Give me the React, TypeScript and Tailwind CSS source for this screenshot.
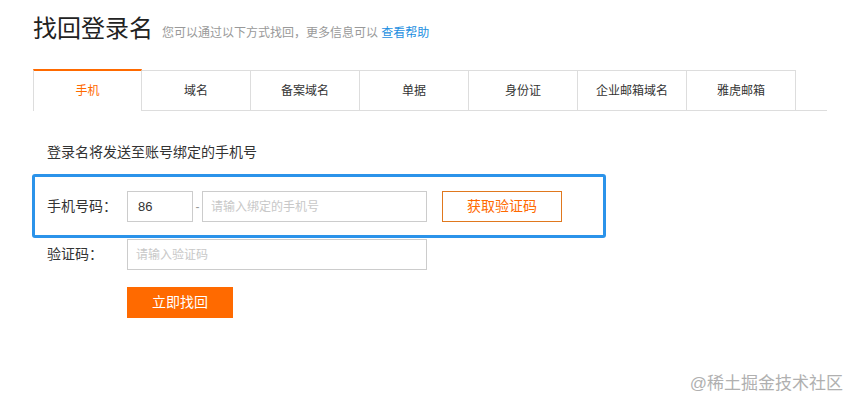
import React from "react";

const tabs = ["手机", "域名", "备案域名", "单据", "身份证", "企业邮箱域名", "雅虎邮箱"];

export default function App() {
  return (
    <div
      className="relative w-[850px] h-[401px] overflow-hidden bg-white text-[#333]"
      style={{ fontFamily: '"Liberation Sans", "Noto Sans CJK SC", sans-serif' }}
    >
      <div className="pl-[33px]">
        {/* Title */}
        <div className="pt-[13px] flex items-baseline h-[45px]">
          <h1 className="text-[24px] leading-[32px] text-[#222] font-normal">找回登录名</h1>
          <span className="ml-[9px] text-[12px] text-[#999]">
            您可以通过以下方式找回，更多信息可以 <span className="text-[#1d8fe1]">查看帮助</span>
          </span>
        </div>

        {/* Tabs */}
        <div className="mt-[24px] flex items-end w-[794px] h-[42px] border-b border-[#ddd]">
          {tabs.map((t, i) =>
            i === 0 ? (
              <div
                key={t}
                className="w-[109px] h-[42px] -mb-px box-border border-t-2 border-t-[#ff6a00] border-l border-r border-[#ddd] bg-white flex items-center justify-center text-[12px] text-[#ff6a00]"
              >
                {t}
              </div>
            ) : (
              <div
                key={t}
                className="w-[109px] h-[40px] box-border border-t border-r border-[#ddd] bg-white flex items-center justify-center text-[12px] text-[#333]"
              >
                {t}
              </div>
            )
          )}
        </div>

        {/* Description */}
        <div className="mt-[31px] pl-[14px] text-[14px] leading-[20px] text-[#333]">
          登录名将发送至账号绑定的手机号
        </div>

        {/* Highlighted phone row */}
        <div className="mt-[12px] -ml-px w-[574px] border-[3px] border-[#2b93ea] rounded-[3px] pl-[12px] pt-[14px] pb-[13px]">
          <div className="flex items-center h-[31px]">
            <span className="w-[80px] text-[14px] text-[#333]">手机号码：</span>
            <div className="w-[66px] h-[31px] border border-[#ccc] flex items-center pl-[10px] text-[13px] text-[#333]">
              86
            </div>
            <span className="w-[9px] text-center text-[12px] text-[#999]">-</span>
            <div className="w-[225px] h-[31px] border border-[#ccc] flex items-center pl-[8px] text-[12px] text-[#c8c8c8]">
              请输入绑定的手机号
            </div>
            <div className="ml-[15px] w-[120px] h-[31px] border border-[#e0781e] flex items-center justify-center text-[14px] text-[#ff6a00]">
              获取验证码
            </div>
          </div>
        </div>

        {/* Verification code row */}
        <div className="mt-px pl-[14px] flex items-center h-[31px]">
          <span className="w-[80px] text-[14px] text-[#333]">验证码：</span>
          <div className="w-[300px] h-[31px] border border-[#ccc] flex items-center pl-[8px] text-[12px] text-[#c8c8c8]">
            请输入验证码
          </div>
        </div>

        {/* Submit */}
        <div className="mt-[17px] pl-[94px]">
          <div className="w-[106px] h-[31px] bg-[#ff6a00] flex items-center justify-center text-[14px] text-white">
            立即找回
          </div>
        </div>
      </div>

      {/* Watermark */}
      <div className="absolute right-[7px] bottom-[6px] text-[17px] leading-[22px] text-[#b0b0b0]">
        @稀土掘金技术社区
      </div>
    </div>
  );
}
